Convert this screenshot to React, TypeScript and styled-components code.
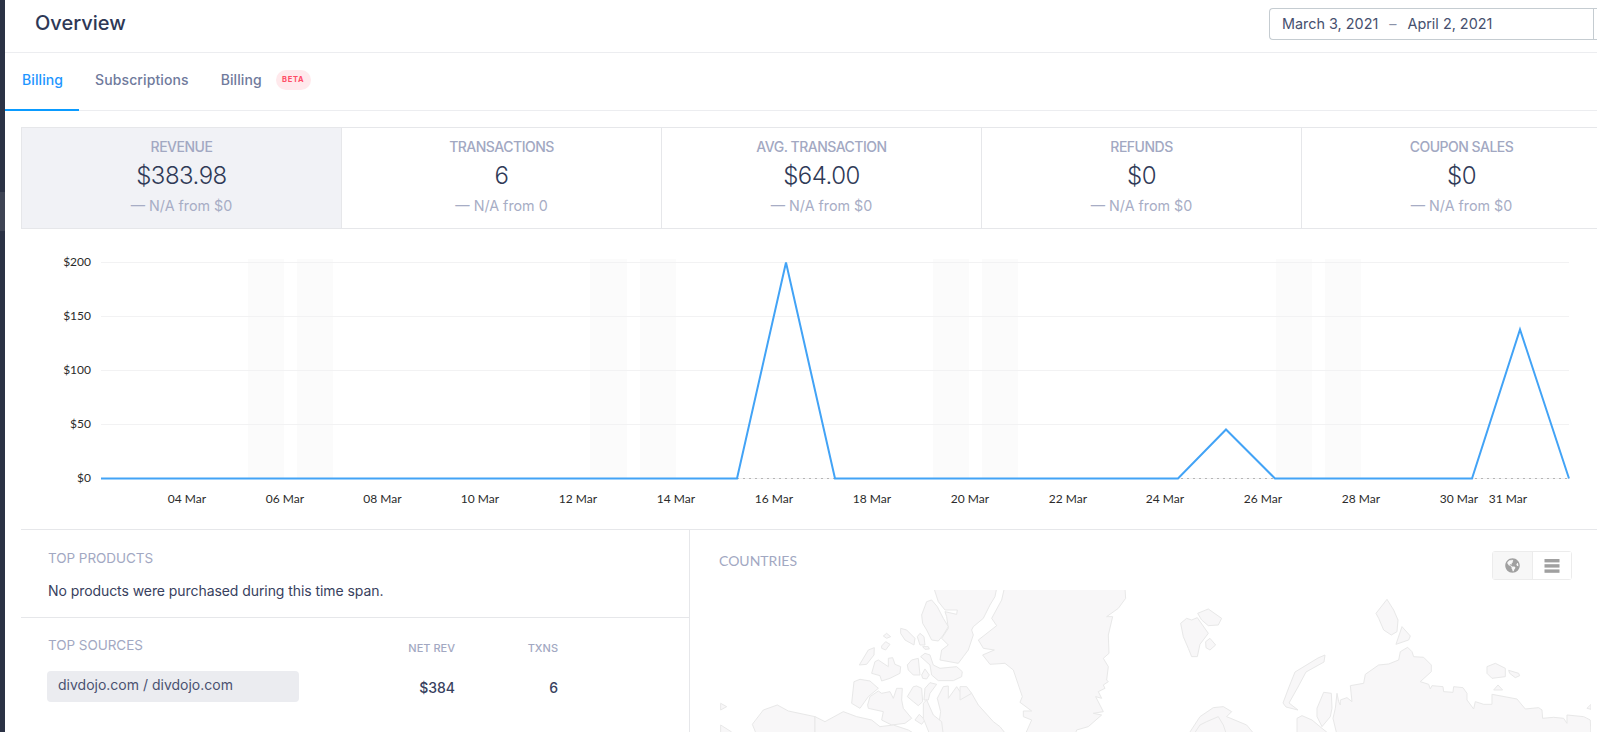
import React from "react";
import styled, { createGlobalStyle } from "styled-components";
import { FaGlobeAmericas } from "react-icons/fa";

const Global = createGlobalStyle`
  html, body { margin: 0; padding: 0; width: 1597px; height: 732px; overflow: hidden; background: #fff; }
  * { box-sizing: border-box; }
  body { font-family: Inter, "Liberation Sans", sans-serif; color: #2f3a57; }
`;

const Page = styled.div`
  display: flex;
  width: 1597px;
  height: 732px;
  overflow: hidden;
`;
const Rail = styled.aside`
  flex: 0 0 5px;
  background: #2b3245;
  padding-top: 192px;
`;
const RailItem = styled.div`
  height: 39px;
  background: #3e4454;
`;
const Main = styled.main`
  flex: 0 0 1592px;
  min-width: 0;
  overflow: hidden;
`;
const Header = styled.header`
  height: 53px;
  border-bottom: 1px solid #ecedf0;
  display: flex;
  justify-content: space-between;
  padding: 8px 0 0 30px;
`;
const Title = styled.h1`
  margin: 0;
  font-size: 20px;
  font-weight: 500;
  line-height: 30px;
  color: #2e3856;
`;
const DatePicker = styled.div`
  width: 328px;
  height: 32px;
  border: 1px solid #c5ccd1;
  border-right: 0;
  border-radius: 4px 0 0 4px;
  display: flex;
  justify-content: space-between;
  font-size: 14.4px;
  line-height: 30px;
  color: #46506e;
  padding-left: 12px;
`;
const DateRange = styled.span`
  white-space: nowrap;
`;
const DateDash = styled.span`
  margin: 0 11px;
  color: #8a92a8;
`;
const DateToggle = styled.span`
  width: 4px;
  border-left: 1px solid #c5ccd1;
`;
const Tabs = styled.nav`
  height: 58px;
  border-bottom: 1px solid #ecedf0;
  display: flex;
`;
const Tab = styled.div<{ $active?: boolean }>`
  height: 58px;
  padding: 0 16px 3px;
  display: flex;
  align-items: center;
  gap: 14px;
  font-size: 14px;
  font-weight: 500;
  letter-spacing: 0.1px;
  color: ${(p) => (p.$active ? "#1e96ff" : "#6f7a9c")};
  border-bottom: 2px solid ${(p) => (p.$active ? "#0a9bff" : "transparent")};
  &:first-child { padding-left: 17px; }
`;
const Badge = styled.span`
  width: 35px;
  height: 20px;
  border-radius: 10px;
  background: #ffe9ec;
  color: #ff4d66;
  font-size: 7.5px;
  font-weight: 700;
  letter-spacing: 0.7px;
  display: flex;
  align-items: center;
  justify-content: center;
`;
const Stats = styled.section`
  display: flex;
  width: 1700px;
  margin: 16px 0 0 16px;
  height: 102px;
  border: 1px solid #e6e7ea;
  border-width: 1px 0 1px 1px;
`;
const Stat = styled.div<{ $active?: boolean }>`
  flex: 0 0 320px;
  border-right: 1px solid #e6e7ea;
  background: ${(p) => (p.$active ? "#f1f2f6" : "#fff")};
  text-align: center;
  padding-top: 9px;
`;
const StatLabel = styled.div`
  font-size: 14px;
  font-weight: 450;
  line-height: 20px;
  letter-spacing: -0.5px;
  color: #a2a8c2;
`;
const StatValue = styled.div`
  font-size: 24px;
  font-weight: 350;
  line-height: 36px;
  letter-spacing: -0.5px;
  color: #2f3a57;
  padding-top: 1px;
`;
const StatDelta = styled.div`
  font-size: 14.3px;
  line-height: 22px;
  color: #a7adc5;
  padding-top: 1px;
`;
const Chart = styled.svg`
  display: block;
  width: 1576px;
  height: 300px;
  margin-left: 16px;
  text {
    font-family: Lato, "Open Sans", sans-serif;
    font-size: 12px;
    fill: #2b2b2b;
  }
`;
const Bottom = styled.section`
  margin-left: 16px;
  height: 300px;
  border-top: 1px solid #e6e7ea;
  display: flex;
`;
const LeftColumn = styled.div`
  flex: 0 0 669px;
  border-right: 1px solid #e6e7ea;
`;
const ProductsBlock = styled.div`
  height: 88px;
  border-bottom: 1px solid #e6e7ea;
  padding: 19px 0 0 27px;
`;
const SectionLabel = styled.h2`
  margin: 0;
  font-size: 13.5px;
  font-weight: 400;
  line-height: 18px;
  letter-spacing: -0.05px;
  color: #a2a8c2;
  align-self: start;
`;
const Empty = styled.p`
  margin: 15px 0 0;
  font-size: 14px;
  line-height: 18px;
  letter-spacing: -0.07px;
  color: #38415e;
`;
const SourcesBlock = styled.div`
  padding: 18px 0 0 26px;
  width: 538px;
`;
const SourcesHead = styled.div`
  display: grid;
  grid-template-columns: 252px 156px 103px;
  align-items: end;
  height: 19px;
  & > h2 { padding-left: 1px; }
`;
const ColHead = styled.span`
  text-align: right;
  font-size: 11px;
  line-height: 14px;
  font-weight: 500;
  color: #a2a8c2;
`;
const SourceRow = styled.div`
  display: grid;
  grid-template-columns: 252px 156px 103px;
  align-items: center;
  margin-top: 16px;
`;
const SourcePill = styled.div`
  height: 31px;
  border-radius: 4px;
  background: #ebecf0;
  padding-left: 11px;
  font-size: 14px;
  line-height: 28px;
  color: #4a5270;
`;
const Num = styled.span`
  text-align: right;
  font-size: 14px;
  font-weight: 500;
  color: #38415e;
  padding-top: 2px;
`;
const RightColumn = styled.div`
  flex: 1;
  min-width: 0;
`;
const CountriesHead = styled.div`
  display: flex;
  justify-content: space-between;
  padding: 21px 25px 0 29px;
  height: 60px;
`;
const CountriesLabel = styled.h2`
  margin: 0;
  font-family: Lato, sans-serif;
  font-size: 14px;
  font-weight: 400;
  line-height: 20px;
  color: #a2a8c2;
`;
const ToggleGroup = styled.div`
  display: flex;
  height: 29px;
  width: 80px;
  border: 1px solid #ececec;
  border-radius: 3px;
`;
const ToggleButton = styled.span<{ $on?: boolean }>`
  flex: 1;
  display: flex;
  align-items: center;
  justify-content: center;
  color: #a0a0a0;
  background: ${(p) => (p.$on ? "#f7f7f7" : "#fff")};
  & + & { border-left: 1px solid #ececec; }
`;
const WorldMap = styled.svg`
  display: block;
  width: 888px;
  height: 142px;
  margin-left: 13px;
  polygon {
    fill: #f8f7f8;
    stroke: #e8e8e8;
    stroke-width: 1;
    stroke-linejoin: round;
    vector-effect: non-scaling-stroke;
  }
`;

const stats = [
  ["REVENUE", "$383.98", "— N/A from $0"],
  ["TRANSACTIONS", "6", "— N/A from 0"],
  ["AVG. TRANSACTION", "$64.00", "— N/A from $0"],
  ["REFUNDS", "$0", "— N/A from $0"],
  ["COUPON SALES", "$0", "— N/A from $0"],
];
const gridY: [number, string][] = [[262, "$200"], [316, "$150"], [370, "$100"], [424, "$50"], [478, "$0"]];
const bands: [number, number][] = [[248, 284], [297, 333], [590, 627], [640, 676], [933, 969], [982, 1018], [1276, 1312], [1325, 1361]];
const xLabels: [number, string][] = [
  [187, "04 Mar"], [285, "06 Mar"], [382.5, "08 Mar"], [480, "10 Mar"], [578, "12 Mar"], [676, "14 Mar"], [774, "16 Mar"],
  [872, "18 Mar"], [970, "20 Mar"], [1068, "22 Mar"], [1165, "24 Mar"], [1263, "26 Mar"], [1361, "28 Mar"], [1459, "30 Mar"], [1508, "31 Mar"],
];

const westMap = [
  "702,10 890,10 885,35 870,60 850,100 820,125 815,135 820,150 805,195 790,215 775,235 720,225 725,195 745,180 725,160 745,130 740,95 735,80 770,88 772,75 735,75 715,50",
  "665,90 680,50 695,45 712,65 730,100 745,125 730,150 715,168 695,165 680,135 668,115",
  "550,153 560,145 572,155 560,160",
  "545,183 557,170 570,178 557,195 545,190",
  "602,130 620,135 645,160 642,180 615,165 602,145",
  "652,155 660,145 672,155 675,180 660,180",
  "668,185 685,185 688,192 675,193",
  "478,240 505,195 523,188 522,210 500,238",
  "515,265 525,230 535,225 565,245 565,220 578,218 585,238 602,245 600,265 570,280 545,288 540,272",
  "622,240 635,225 655,220 660,270 640,270 625,255",
  "665,270 675,252 688,270 680,282 668,280",
  "662,215 675,205 690,210 700,240 720,250 770,245 787,260 785,275 760,287 715,287 695,270 690,240",
  "455,355 462,290 480,283 510,288 535,310 505,335 480,370",
  "503,360 510,335 535,318 545,325 570,320 580,340 590,310 607,310 605,345 610,370 635,400 615,415 575,420 545,405 550,380 505,370",
  "622,335 640,305 650,303 665,310 668,350 655,362 640,350",
  "672,345 675,310 690,293 710,298 690,325 685,345",
  "645,405 658,388 675,405 665,418",
  "712,340 730,305 745,303 745,340 770,305 780,320 815,325 835,360 880,410 900,425 920,450 712,450 722,380",
  "157,418 190,375 232,360 265,378 345,395 345,450 170,450",
  "345,395 375,410 430,380 470,395 515,405 540,425 580,420 625,435 650,450 345,450",
  "62,420 95,441 100,450 62,450",
  "62,355 80,365 62,375",
  "670,355 680,345 700,390 725,410 730,450 690,450 670,400",
];
const eastMap = [
  "133,10 495,10 497,40 475,70 440,95 458,95 445,150 447,205 430,220 445,245 440,285 445,290 430,300 435,310 415,320 425,340 407,335 430,380 400,385 425,390 385,425 350,435 345,450 195,450 215,405 190,395 190,378 215,378 180,352 187,335 160,255 135,235 90,238 68,210 103,195 70,190 55,165 110,122 95,100 125,45",
  "662,115 680,100 695,105 712,98 745,145 720,178 712,215 695,215 685,190 670,155",
  "713,85 745,72 785,100 775,120 745,122 725,105",
  "737,170 750,160 767,180 750,195 738,188",
  "690,441 720,395 760,368 790,365 815,380 800,395 860,420 885,450 690,450",
  "700,450 720,420 740,410 775,395 790,420 800,450",
  "0,305 20,305 35,325 0,345",
];
const farEast = [
  "237,85 270,43 290,75 303,105 300,140 283,150 260,135 245,100",
  "297,178 315,125 340,153 335,165",
  "120,450 108,400 115,370 120,325 125,350 130,360 130,345 150,338 165,350 160,302 200,295 205,268 245,240 275,237 305,225 310,200 332,187 345,200 350,215 380,217 403,240 403,260 370,290 395,298 400,312 405,302 438,305 440,320 468,322 470,305 498,308 510,325 510,345 530,372 535,350 560,358 585,358 585,328 660,342 685,372 725,368 735,375 737,400 770,397 800,400 810,415 810,390 860,395 880,405 882,450",
  "570,245 595,235 625,250 625,275 585,280 570,265",
  "635,256 665,265 668,272 655,278 638,265",
  "590,315 603,300 617,315",
  "870,370 882,358 882,373",
  "60,370 80,322 103,325 105,370 100,395 75,425 60,395",
  "0,400 15,392 45,405 75,430 100,450 0,450",
];
const sliver = "1325,655 1324,662 1306,672 1298,687 1289,703 1298,710 1286,707 1283,703 1289,687 1295,672 1318,658";

export default function App() {
  return (
    <Page>
      <Global />
      <Rail><RailItem /></Rail>
      <Main>
        <Header>
          <Title>Overview</Title>
          <DatePicker>
            <DateRange>March 3, 2021<DateDash>–</DateDash>April 2, 2021</DateRange>
            <DateToggle />
          </DatePicker>
        </Header>
        <Tabs>
          <Tab $active>Billing</Tab>
          <Tab>Subscriptions</Tab>
          <Tab>Billing<Badge>BETA</Badge></Tab>
        </Tabs>
        <Stats>
          {stats.map(([label, value, delta], i) => (
            <Stat key={label} $active={i === 0}>
              <StatLabel>{label}</StatLabel>
              <StatValue>{value}</StatValue>
              <StatDelta>{delta}</StatDelta>
            </Stat>
          ))}
        </Stats>
        <Chart viewBox="21 229 1576 300">
          {bands.map(([a, b]) => (
            <rect key={a} x={a} y={259} width={b - a} height={219} fill="#fbfbfb" />
          ))}
          {gridY.map(([y, label]) => (
            <g key={label}>
              <line x1={101} x2={1569} y1={y + 0.5} y2={y + 0.5} stroke="#f2f2f3" />
              <text x={91} y={y + 4} textAnchor="end">{label}</text>
            </g>
          ))}
          <line x1={737} x2={1569} y1={478.5} y2={478.5} stroke="#b5b5b5" strokeDasharray="2 4" />
          <polyline
            points="101,478.5 737,478.5 786,262.5 835,478.5 1178,478.5 1226,429.5 1275,478.5 1472,478.5 1520,329.5 1569,478.5"
            fill="none"
            stroke="#42a3f6"
            strokeWidth={2}
            strokeLinejoin="miter"
          />
          {xLabels.map(([x, label]) => (
            <text key={label} x={x} y={503} textAnchor="middle">{label}</text>
          ))}
        </Chart>
        <Bottom>
          <LeftColumn>
            <ProductsBlock>
              <SectionLabel>TOP PRODUCTS</SectionLabel>
              <Empty>No products were purchased during this time span.</Empty>
            </ProductsBlock>
            <SourcesBlock>
              <SourcesHead>
                <SectionLabel>TOP SOURCES</SectionLabel>
                <ColHead>NET REV</ColHead>
                <ColHead>TXNS</ColHead>
              </SourcesHead>
              <SourceRow>
                <SourcePill>divdojo.com / divdojo.com</SourcePill>
                <Num>$384</Num>
                <Num>6</Num>
              </SourceRow>
            </SourcesBlock>
          </LeftColumn>
          <RightColumn>
            <CountriesHead>
              <CountriesLabel>COUNTRIES</CountriesLabel>
              <ToggleGroup>
                <ToggleButton $on><FaGlobeAmericas size={15} /></ToggleButton>
                <ToggleButton>
                  <svg width="16" height="14" viewBox="0 0 16 14" fill="currentColor">
                    <rect x="0.5" y="0" width="15" height="3.4" />
                    <rect x="0.5" y="5.2" width="15" height="3.4" />
                    <rect x="0.5" y="10.4" width="15" height="3.4" />
                  </svg>
                </ToggleButton>
              </ToggleGroup>
            </CountriesHead>
            <WorldMap viewBox="703 590 888 142">
              <g transform="translate(700 585) scale(0.3333)">
                {westMap.map((p) => <polygon key={p} points={p} />)}
              </g>
              <g transform="translate(960 585) scale(0.3333)">
                {eastMap.map((p) => <polygon key={p} points={p} />)}
              </g>
              <g transform="translate(1297 585) scale(0.3333)">
                {farEast.map((p) => <polygon key={p} points={p} />)}
              </g>
              <polygon points={sliver} />
            </WorldMap>
          </RightColumn>
        </Bottom>
      </Main>
    </Page>
  );
}
